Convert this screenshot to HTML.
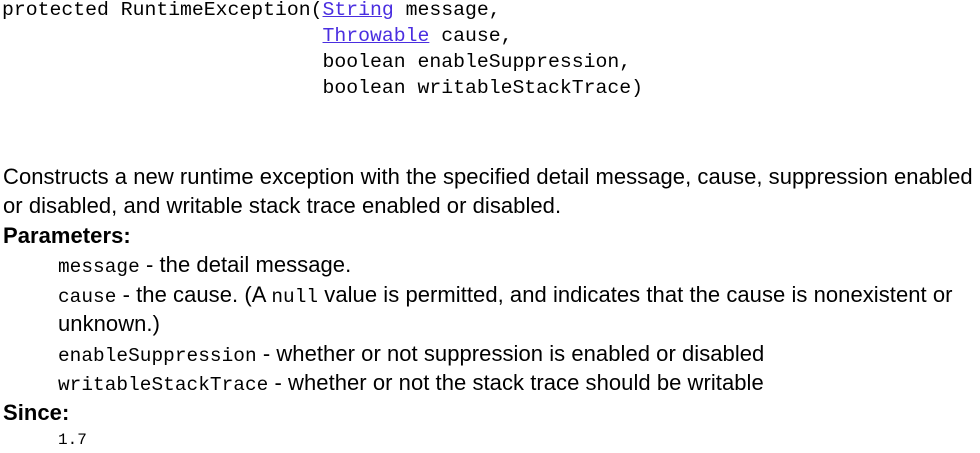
<!DOCTYPE html>
<html><head><style>
body{margin:0;width:980px;height:450px;background:#fff;position:relative;overflow:hidden;color:#000}
.m{position:absolute;font-family:"Liberation Mono",monospace;font-size:19.8px;white-space:pre;line-height:26px}
.s{position:absolute;font-family:"Liberation Sans",sans-serif;font-size:22px;letter-spacing:0.05px;white-space:pre;line-height:28px}
.s code{font-family:"Liberation Mono",monospace;font-size:19.4px}
a{color:#4a2ee0;text-decoration:underline}
b{font-weight:bold}
</style></head><body>
<div class="m" style="left:2px;top:-3px">protected RuntimeException(<a>String</a> message,</div>
<div class="m" style="left:2px;top:23px">                           <a>Throwable</a> cause,</div>
<div class="m" style="left:2px;top:49px">                           boolean enableSuppression,</div>
<div class="m" style="left:2px;top:75px">                           boolean writableStackTrace)</div>
<div class="s" style="left:3px;top:163px">Constructs a new runtime exception with the specified detail message, cause, suppression enabled</div>
<div class="s" style="left:3px;top:192px">or disabled, and writable stack trace enabled or disabled.</div>
<div class="s" style="left:3px;top:222px"><b>Parameters:</b></div>
<div class="s" style="left:58px;top:251px"><code>message</code> - the detail message.</div>
<div class="s" style="left:58px;top:281px"><code>cause</code> - the cause. (A <code>null</code> value is permitted, and indicates that the cause is nonexistent or</div>
<div class="s" style="left:58px;top:310px">unknown.)</div>
<div class="s" style="left:58px;top:340px"><code>enableSuppression</code> - whether or not suppression is enabled or disabled</div>
<div class="s" style="left:58px;top:369px"><code>writableStackTrace</code> - whether or not the stack trace should be writable</div>
<div class="s" style="left:3px;top:399px"><b>Since:</b></div>
<div class="m" style="left:58px;top:427px;font-size:16px">1.7</div>
</body></html>
